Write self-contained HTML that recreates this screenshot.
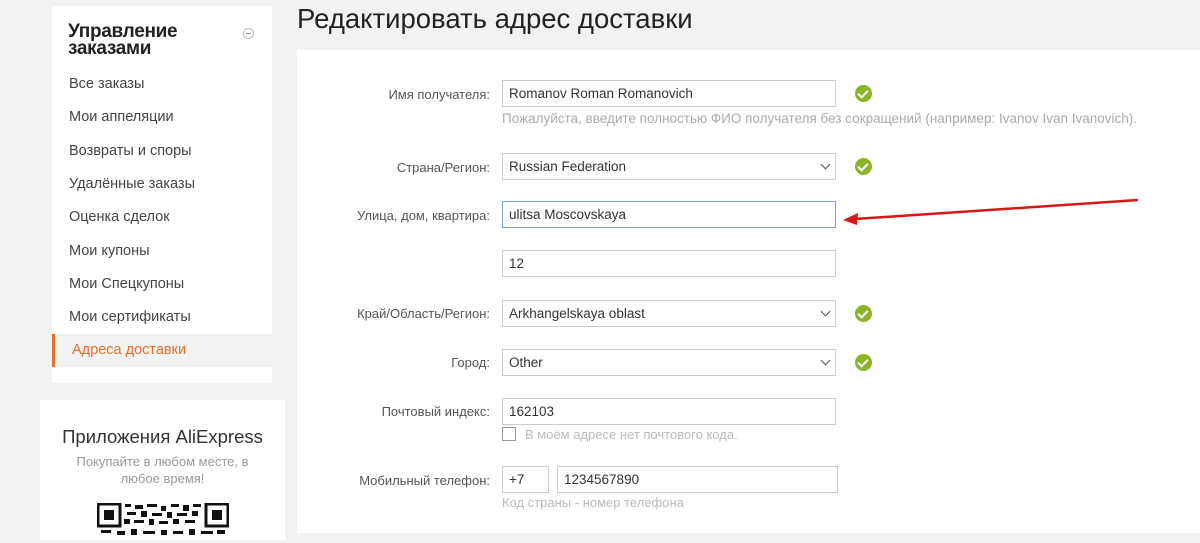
<!DOCTYPE html>
<html><head><meta charset="utf-8"><style>
*{margin:0;padding:0;box-sizing:border-box}
body{width:1200px;height:533px;overflow:hidden;background:#f2f2f2;font-family:"Liberation Sans",sans-serif;position:relative;color:#333}
.a{position:absolute}
.side{left:52px;top:6px;width:220px;height:377px;background:#fff}
.side h2{position:absolute;left:16px;top:17px;font-size:19px;line-height:17px;font-weight:bold;color:#222;letter-spacing:-0.3px}
.mi{position:absolute;left:17px;font-size:14.5px;color:#444}
.act{position:absolute;left:0;top:328px;width:220px;height:33px;background:#f2f2f2;border-left:3px solid #e6702b}
.act span{position:absolute;left:17px;top:8px;font-size:14.5px;color:#e6702b}
.app{left:40px;top:400px;width:245px;height:140px;background:#fff;text-align:center}
.title{left:297px;top:3px;font-size:27.5px;color:#222}
.panel{left:297px;top:50px;width:903px;height:483px;background:#fff}
.lbl{position:absolute;right:710px;font-size:13px;color:#555;text-align:right;white-space:nowrap}
.in{position:absolute;height:27px;border:1px solid #ccc;background:#fff;font-size:13.5px;color:#333;padding:5px 0 0 6px;white-space:nowrap}
.hint{position:absolute;font-size:13px;color:#aaa;white-space:nowrap}
.ok{position:absolute;width:17px;height:17px;border-radius:50%;background:#8ab52a}
.ok:after{content:"";position:absolute;left:5px;top:3px;width:4px;height:8px;border:solid #fff;border-width:0 2px 2px 0;transform:rotate(45deg)}
.sel:after{content:"";position:absolute;right:6px;top:7px;width:6px;height:6px;border:solid #555;border-width:0 1.5px 1.5px 0;transform:rotate(45deg)}
</style></head><body>
<div class="a side">
<h2>Управление<br>заказами</h2>
<div class="a" style="left:191px;top:22px;width:11px;height:11px;border:1px solid #bbb;border-radius:50%"><div class="a" style="left:2px;top:4px;width:5px;height:1px;background:#999"></div></div>
<div class="mi" style="top:70px">Все заказы</div>
<div class="mi" style="top:103px">Мои аппеляции</div>
<div class="mi" style="top:137px">Возвраты и споры</div>
<div class="mi" style="top:170px">Удалённые заказы</div>
<div class="mi" style="top:203px">Оценка сделок</div>
<div class="mi" style="top:237px">Мои купоны</div>
<div class="mi" style="top:270px">Мои Спецкупоны</div>
<div class="mi" style="top:303px">Мои сертификаты</div>
<div class="act"><span>Адреса доставки</span></div>
</div>
<div class="a app">
<div style="margin-top:26px;font-size:18.5px;color:#333">Приложения AliExpress</div>
<div style="margin-top:5px;font-size:13px;color:#999;line-height:17px">Покупайте в любом месте, в<br>любое время!</div>
<svg class="a" style="left:57px;top:103px" width="132" height="40" viewBox="0 0 132 40">
<rect x="1" y="1" width="22" height="22" fill="none" stroke="#111" stroke-width="3"/><rect x="7" y="7" width="10" height="10" fill="#111"/>
<rect x="109" y="1" width="22" height="22" fill="none" stroke="#111" stroke-width="3"/><rect x="115" y="7" width="10" height="10" fill="#111"/>
<g fill="#111"><rect x="28" y="1" width="6" height="3"/><rect x="38" y="2" width="8" height="4"/><rect x="50" y="1" width="10" height="3"/><rect x="64" y="3" width="5" height="5"/><rect x="74" y="1" width="8" height="3"/><rect x="86" y="2" width="6" height="6"/><rect x="96" y="1" width="8" height="3"/>
<rect x="30" y="9" width="9" height="3"/><rect x="44" y="8" width="6" height="6"/><rect x="55" y="10" width="10" height="3"/><rect x="70" y="9" width="5" height="6"/><rect x="80" y="10" width="10" height="3"/><rect x="95" y="8" width="6" height="5"/>
<rect x="27" y="16" width="6" height="5"/><rect x="37" y="17" width="10" height="3"/><rect x="52" y="16" width="5" height="6"/><rect x="62" y="18" width="9" height="3"/><rect x="76" y="16" width="6" height="5"/><rect x="88" y="17" width="10" height="3"/>
<rect x="4" y="27" width="10" height="3"/><rect x="20" y="28" width="8" height="4"/><rect x="34" y="26" width="6" height="6"/><rect x="46" y="28" width="12" height="3"/><rect x="64" y="27" width="6" height="5"/><rect x="76" y="28" width="10" height="3"/><rect x="92" y="26" width="6" height="6"/><rect x="104" y="28" width="12" height="3"/><rect x="120" y="27" width="8" height="4"/></g>
</svg>
</div>
<div class="a title">Редактировать адрес доставки</div>
<div class="a panel"></div>

<div class="lbl" style="top:87px">Имя получателя:</div>
<div class="in" style="left:502px;top:80px;width:334px">Romanov Roman Romanovich</div>
<div class="ok" style="left:855px;top:85px"></div>
<div class="hint" style="left:502px;top:111px;font-size:13.5px">Пожалуйста, введите полностью ФИО получателя без сокращений (например: Ivanov Ivan Ivanovich).</div>

<div class="lbl" style="top:160px">Страна/Регион:</div>
<div class="in sel" style="left:502px;top:153px;width:334px">Russian Federation</div>
<div class="ok" style="left:855px;top:158px"></div>

<div class="lbl" style="top:208px">Улица, дом, квартира:</div>
<div class="in" style="left:502px;top:201px;width:334px;border-color:#7aa7d6">ulitsa Moscovskaya</div>

<div class="in" style="left:502px;top:250px;width:334px">12</div>

<div class="lbl" style="top:306px">Край/Область/Регион:</div>
<div class="in sel" style="left:502px;top:300px;width:334px">Arkhangelskaya oblast</div>
<div class="ok" style="left:855px;top:305px"></div>

<div class="lbl" style="top:355px">Город:</div>
<div class="in sel" style="left:502px;top:349px;width:334px">Other</div>
<div class="ok" style="left:855px;top:354px"></div>

<div class="lbl" style="top:404px">Почтовый индекс:</div>
<div class="in" style="left:502px;top:398px;width:334px">162103</div>
<div class="a" style="left:502px;top:427px;width:14px;height:14px;border:1px solid #999"></div>
<div class="hint" style="left:525px;top:427px;color:#bbb">В моём адресе нет почтового кода.</div>

<div class="lbl" style="top:473px">Мобильный телефон:</div>
<div class="in" style="left:502px;top:466px;width:47px">+7</div>
<div class="in" style="left:557px;top:466px;width:281px">1234567890</div>
<div class="hint" style="left:502px;top:495px;color:#bbb">Код страны - номер телефона</div>

<svg class="a" style="left:0;top:0" width="1200" height="533"><line x1="1138" y1="200" x2="855" y2="219" stroke="#d81818" stroke-width="2.5"/><polygon points="843,220 858,213 857,225" fill="#d81818"/></svg>
</body></html>
